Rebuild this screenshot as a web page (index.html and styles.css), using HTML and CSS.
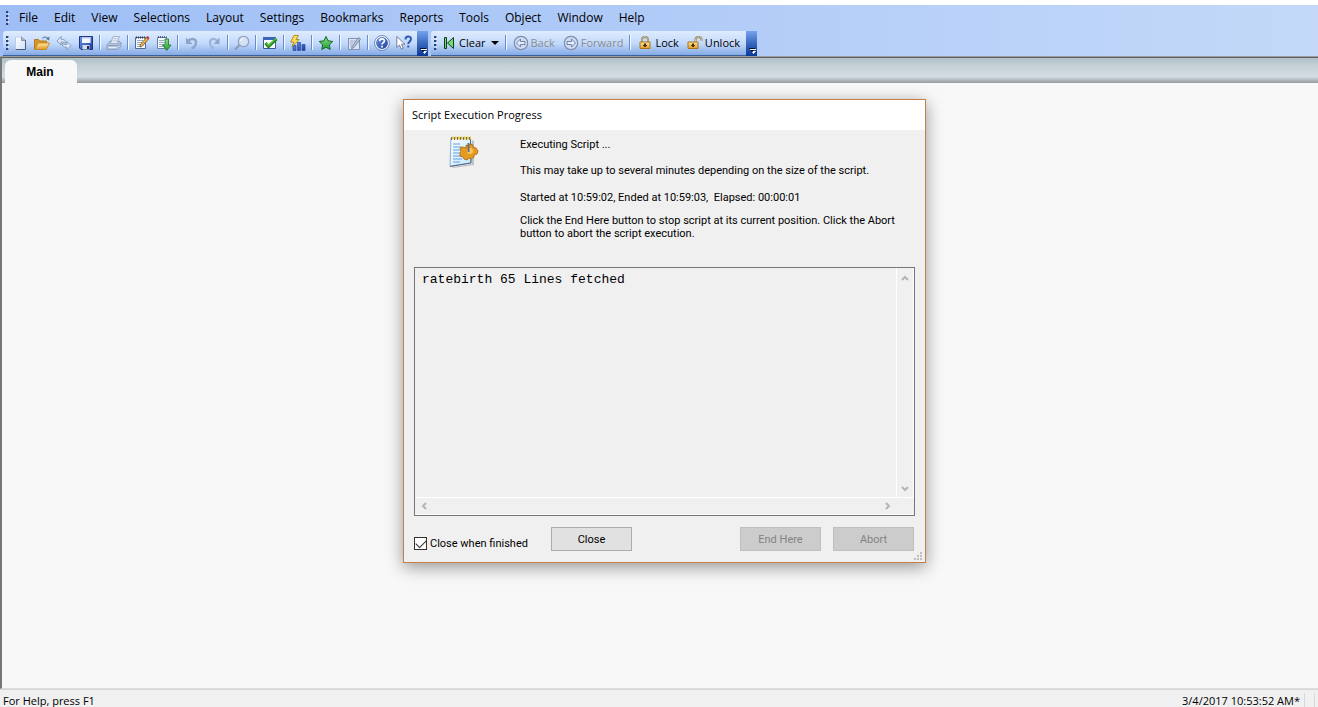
FILE: index.html
```
<!DOCTYPE html>
<html lang="en">
<head>
<meta charset="utf-8">
<title>Main</title>
<link rel="stylesheet" href="styles.css">
</head>
<body>
<svg width="0" height="0" class="defs" aria-hidden="true">
  <defs>
    <linearGradient id="gold" x1="0" y1="0" x2="0" y2="1"><stop offset="0" stop-color="#ffe7a0"/><stop offset="1" stop-color="#e19a28"/></linearGradient>
    <linearGradient id="paper" x1="0" y1="0" x2="1" y2="1"><stop offset="0" stop-color="#fff"/><stop offset="1" stop-color="#cfe0f4"/></linearGradient>
    <linearGradient id="blue" x1="0" y1="0" x2="1" y2="1"><stop offset="0" stop-color="#6f97e4"/><stop offset="1" stop-color="#1c3c9c"/></linearGradient>
    <linearGradient id="green" x1="0" y1="0" x2="0" y2="1"><stop offset="0" stop-color="#8be37a"/><stop offset="1" stop-color="#1f9a3a"/></linearGradient>
    <linearGradient id="sheet" x1="0" y1="0" x2="1" y2="1"><stop offset="0" stop-color="#fff"/><stop offset="1" stop-color="#bfe6fa"/></linearGradient>
  </defs>
</svg>
<div class="app">
  <header class="bars">
    <nav class="menubar" aria-label="Menu">
      <span class="grip"></span>
      <button>File</button><button>Edit</button><button>View</button><button>Selections</button><button>Layout</button><button>Settings</button><button>Bookmarks</button><button>Reports</button><button>Tools</button><button>Object</button><button>Window</button><button>Help</button>
    </nav>
    <div class="toolbars">
      <div class="toolbar" role="toolbar" aria-label="Standard">
        <span class="grip"></span>
        <button class="tool" aria-label="New"><svg viewBox="0 0 16 16"><path d="M3 1.500h7l3.500 3.500v10H3z" fill="url(#paper)"/><path d="M3.500 14V2H10" fill="none" stroke="#b9cbe6"/><path d="M13.500 5v9.500H3.500" fill="none" stroke="#4d5b76"/><path d="M9.500 2v3.500h4z" fill="#a9bad3" stroke="#65748e" stroke-width=".6"/></svg></button>
        <button class="tool" aria-label="Open"><svg viewBox="0 0 16 16"><path d="M.5 14V4.500h4l1 1.500h7v3" fill="#d9962a" stroke="#b87a1c"/><path d="M.7 14.500 4 8h11.700l-3.500 6.500z" fill="url(#gold)" stroke="#c27c15" stroke-width=".8"/><path d="M8.500 3.500c1.500-2 4-2 5.500 0" fill="none" stroke="#58779d" stroke-width="1.200"/><path d="m15.500 1.500-.3 4-3.200-1.500z" fill="#58779d"/></svg></button>
        <button class="tool" disabled aria-label="Reload"><svg viewBox="0 0 16 16"><path d="M1 6 5 1.500v2.700c3.500 0 5 1.300 5 4.300C9 7.200 7.500 7 5 7v2.800z" fill="#dbe6f7" stroke="#8195b8" stroke-width=".9"/><path d="m15 10.500-4.200 4.500v-2.700c-3.300 0-4.800-1.300-4.800-4.300 1 1.300 2.500 1.500 4.800 1.500V6.500z" fill="#dbe6f7" stroke="#8195b8" stroke-width=".9"/></svg></button>
        <button class="tool" aria-label="Save"><svg viewBox="0 0 16 16"><path d="M1.500 1.500h13v13H3l-1.500-1.500z" fill="url(#blue)" stroke="#20377d"/><path d="M4 2h8.500v6H4z" fill="#f3f7ff"/><path d="M4 2h8.500v1.500H4z" fill="#b8caef"/><path d="M4.500 10h7v4.500h-7z" fill="#d3dbe9"/><path d="M9 11h2v3H9z" fill="#1c2a55"/></svg></button>
        <span class="sep"></span>
        <button class="tool" disabled aria-label="Print"><svg viewBox="0 0 16 16"><path d="m1 10 3-4h9l2 2v3l-3 3.500H1z" fill="#b4c3dc" stroke="#8798b5" stroke-width=".8"/><path d="M4.500 8.500 7 1.500h6.500l-2.500 7z" fill="#e4ecf8" stroke="#95a6c2" stroke-width=".8"/><path d="M7.300 3.700h4.500M6.600 5.800h4.500" stroke="#a5b4cd" stroke-width=".7"/><path d="M1 10.500h11l3-3" fill="none" stroke="#8496b4" stroke-width=".8"/><path d="M2.500 12.500h8" stroke="#e4ecf8"/></svg></button>
        <span class="sep"></span>
        <button class="tool" aria-label="Edit script"><svg viewBox="0 0 16 16"><path d="M1.500 2.500h10v11h-10z" fill="#f5f8fd" stroke="#53688a"/><path d="M2 2.500h9.500" stroke="#2c3a55" stroke-dasharray="1 1" stroke-width="2"/><path d="M3 5.500h6M3 7.500h5M3 9.500h4M3 11.500h4" stroke="#7f96b8" stroke-width=".8"/><path d="m6.500 9.500 6-7 2 1.500-6 7-2.500 1z" fill="#f1b64a" stroke="#72511e" stroke-width=".8"/><path d="m12 2.500 1.500-1.500 2 1.500-1.200 2z" fill="#c33b35"/></svg></button>
        <button class="tool" aria-label="Run script"><svg viewBox="0 0 16 16"><path d="M1.500 2.500h9v11h-9z" fill="#f5f8fd" stroke="#6b7fa2"/><path d="M2 2h8.500" stroke="#3a4a69" stroke-dasharray="1 1" stroke-width="1.500"/><path d="M3 5.500h5M3 7.500h5M3 9.500h5M3 11.500h4" stroke="#7f96b8" stroke-width=".8"/><path d="M9 4h3.500v6H15l-4.200 5.500L6.500 10H9z" fill="url(#green)" stroke="#226f2c" stroke-width=".8"/></svg></button>
        <span class="sep"></span>
        <button class="tool" disabled aria-label="Undo"><svg viewBox="0 0 16 16"><path d="M4.500 5.500C8 3 12 3.500 12 7.500c0 3-2 5-4.500 6" fill="none" stroke="#8ea4cb" stroke-width="2.400"/><path d="M2 2.500V9h6.500z" fill="#8ea4cb"/></svg></button>
        <button class="tool" disabled aria-label="Redo"><svg viewBox="0 0 16 16"><path d="M11 5.500C8 3 4 3.500 4 7.500c0 3 2 5 4 6" fill="none" stroke="#a0b4d8" stroke-width="2.200"/><path d="M13.500 2.500V9H7.500z" fill="#8ea4cb"/></svg></button>
        <span class="sep"></span>
        <button class="tool" disabled aria-label="Search"><svg viewBox="0 0 16 16"><path d="m1.500 14 4.500-4.500" stroke="#8d9dbb" stroke-width="2.400" stroke-linecap="round"/><circle cx="9.500" cy="6.500" r="5.200" fill="#d5e1f4" stroke="#92a4c4" stroke-width="1.300"/><path d="M6.500 6c.3-1.500 1.500-2.500 3-2.500" fill="none" stroke="#fff"/></svg></button>
        <span class="sep"></span>
        <button class="tool" aria-label="Current selections"><svg viewBox="0 0 16 16"><path d="M1.500 2.500h12v11h-12z" fill="#fff" stroke="#375aa5"/><path d="M1 2h13v3H1z" fill="#3c65b7"/><path d="m3.500 8 3 3.500L14.500 4" fill="none" stroke="#1e7f16" stroke-width="3"/><path d="m4 8 2.500 2.500 7.500-7" fill="none" stroke="#4fc92d" stroke-width="1.500"/></svg></button>
        <span class="sep"></span>
        <button class="tool" aria-label="Quick chart wizard"><svg viewBox="0 0 16 16"><path d="M3 10.500h3v5H3zM7.500 7.500h3v8h-3zM12 9.500h3v6h-3z" fill="url(#blue)" stroke="#234a9f" stroke-width=".7"/><path d="M4 .5h4.500L6 4.500h3L2 12l1.800-5H.7z" fill="#ffdf4d" stroke="#a87811" stroke-width=".8"/></svg></button>
        <span class="sep"></span>
        <button class="tool" aria-label="Add bookmark"><svg viewBox="0 0 16 16"><path d="m8 1.500 2.100 4.300 4.700.7-3.400 3.300.8 4.700L8 12.300l-4.200 2.200.8-4.700L1.200 6.500l4.700-.7z" fill="url(#green)" stroke="#17672e" stroke-linejoin="round"/></svg></button>
        <span class="sep"></span>
        <button class="tool" disabled aria-label="Notes"><svg viewBox="0 0 16 16"><path d="M2.500 3.500h11v11h-11z" fill="#d9e3f4" stroke="#8193b3"/><path d="M4 6h5M4 8h3M4 10h2" stroke="#9bacc8"/><path d="m6 11.500 6.500-9 2 1.500L8 12.500l-2.500 1z" fill="#b3c2db" stroke="#71829e" stroke-width=".9"/></svg></button>
        <span class="sep"></span>
        <button class="tool" aria-label="Help topics"><svg viewBox="0 0 16 16"><circle cx="8" cy="8" r="6.600" fill="url(#blue)" stroke="#fff" stroke-width="1.300"/><circle cx="8" cy="8" r="7.400" fill="none" stroke="#435f9b" stroke-width=".7"/><path d="M5.700 6.300c0-3.200 4.700-3 4.700-.3C10.400 7.700 8 7.700 8 9.600" fill="none" stroke="#fff" stroke-width="1.700"/><path d="M7.200 10.700h1.700v1.700H7.200z" fill="#fff"/></svg></button>
        <button class="tool" aria-label="Context help"><svg viewBox="0 0 16 16"><path d="M.8 1.500v11l2.700-2.500 1.800 4.200 2-1-1.800-4H9z" fill="#fff" stroke="#68748a" stroke-width=".9"/><path d="M9.500 4.500c0-4 5.500-4 5.500-.5 0 2.500-2.700 2.500-2.700 5" fill="none" stroke="#2f5bb4" stroke-width="2"/><path d="M11.300 10.500h2v2h-2z" fill="#2f5bb4"/></svg></button>
        <button class="overflow" aria-label="Toolbar options"><svg viewBox="0 0 8 8"><path d="M2 3h6v1H2zM3 5h5L5.500 8z" fill="#fff"/><path d="M1 2h6v1H1zM2 4h4L4 6.500z" fill="#0a1034"/></svg></button>
      </div>
      <div class="toolbar" role="toolbar" aria-label="Navigation">
        <span class="grip"></span>
        <button class="labelled"><svg viewBox="0 0 16 16"><path d="M3.500 2.500h2v11h-2zM12.500 2.500v11l-6-5.500z" fill="#6be26b" stroke="#173b1b"/></svg>Clear<i class="caret"></i></button>
        <span class="sep"></span>
        <button class="labelled" disabled><svg viewBox="0 0 16 16"><circle cx="8" cy="8" r="6.700" fill="#cfdcf2" stroke="#7d8eb1" stroke-width="1.200"/><path d="m3.500 8 4-4v2.500H12v3H7.500V12z" fill="#e4edfa" stroke="#6477a0" stroke-width=".9"/></svg>Back</button>
        <button class="labelled" disabled><svg viewBox="0 0 16 16"><circle cx="8" cy="8" r="6.700" fill="#cfdcf2" stroke="#7d8eb1" stroke-width="1.200"/><path d="m12.500 8-4-4v2.500H4v3h4.500V12z" fill="#e4edfa" stroke="#6477a0" stroke-width=".9"/></svg>Forward</button>
        <span class="sep"></span>
        <button class="labelled"><svg viewBox="0 0 16 16"><path d="M5 7V4.500c0-3.500 6-3.500 6 0V7" fill="none" stroke="#8f7f5a" stroke-width="2"/><path d="M5 7V4.500c0-3.500 6-3.500 6 0V7" fill="none" stroke="#efe5c4" stroke-width=".7"/><path d="M3 7h10v6.500H3z" fill="url(#gold)" stroke="#a97418"/><path d="M7 8.500h2V10h1v1H9v1H7v-1H6v-1h1z" fill="#473410"/></svg>Lock</button>
        <button class="labelled"><svg viewBox="0 0 16 16"><path d="M8.500 7V4.500c0-3.500 6-3.500 6 0V6" fill="none" stroke="#8f7f5a" stroke-width="2"/><path d="M8.500 7V4.500c0-3.500 6-3.500 6 0V6" fill="none" stroke="#efe5c4" stroke-width=".7"/><path d="M1 7h10v6.500H1z" fill="url(#gold)" stroke="#a97418"/><path d="M5 8.500h2V10h1v1H7v1H5v-1H4v-1h1z" fill="#473410"/></svg>Unlock</button>
        <button class="overflow" aria-label="Toolbar options"><svg viewBox="0 0 8 8"><path d="M2 3h6v1H2zM3 5h5L5.500 8z" fill="#fff"/><path d="M1 2h6v1H1zM2 4h4L4 6.500z" fill="#0a1034"/></svg></button>
      </div>
    </div>
  </header>
  <main class="workspace">
    <div class="tabs" role="tablist"><button class="tab" role="tab" aria-selected="true">Main</button></div>
    <div class="canvas">
      <section class="dialog" role="dialog" aria-labelledby="dialog-title">
        <h1 id="dialog-title">Script Execution Progress</h1>
        <div class="intro">
          <svg class="script-icon" viewBox="0 0 32 34" aria-hidden="true"><path d="m5 32 20-3V5l2 1v24L6 33z" fill="#8b929e" opacity=".5"/><path d="M4 3h19.500L24 28 3 31z" fill="url(#sheet)" stroke="#8caed0"/><path d="M23.500 3 24 28 3 31.500" fill="none" stroke="#4e6780"/><path d="M6 9h7M6 12h9M6 15h7M6 18h7M6 21h8M6 24h9M6 27h7" stroke="#619ce0"/><path d="M4 3.500h20" stroke="#77705a" stroke-width="3" stroke-dasharray="1 2"/><path d="M5 3h19" stroke="#edca2c" stroke-width="3" stroke-dasharray="1.500 1.500"/><path d="m19 10 3 1 1-2 3 1v2l3 1 2 3-1 3-3 1v2l-3 2-2-1-2 2-3-1-1-2-3-1v-3l1-2-1-3 3-1 3 1z" fill="#e49b20" stroke="#a8640b" stroke-width=".8"/><circle cx="23" cy="16" r="3" fill="#f6c662"/><path d="M21.500 8v9" stroke="#66717d" stroke-width="2"/></svg>
          <div class="messages">
            <p>Executing Script ...</p>
            <p>This may take up to several minutes depending on the size of the script.</p>
            <p>Started at 10:59:02, Ended at 10:59:03,&nbsp; Elapsed: 00:00:01</p>
            <p>Click the End Here button to stop script at its current position. Click the Abort<br>button to abort the script execution.</p>
          </div>
        </div>
        <div class="log">
          <textarea readonly aria-label="Script log">ratebirth 65 Lines fetched</textarea>
          <div class="vscroll"><svg viewBox="0 0 8 6"><path d="m1 5 3-3 3 3"/></svg><svg viewBox="0 0 8 6"><path d="m1 1 3 3 3-3"/></svg></div>
          <div class="hscroll"><svg viewBox="0 0 6 8"><path d="M5 1 2 4l3 3"/></svg><svg viewBox="0 0 6 8"><path d="m1 1 3 3-3 3"/></svg></div>
        </div>
        <div class="actions">
          <label class="check"><input type="checkbox" checked>Close when finished</label>
          <button class="push">Close</button>
          <button class="push end" disabled>End Here</button>
          <button class="push" disabled>Abort</button>
        </div>
        <svg class="resize" viewBox="0 0 8 8" aria-hidden="true"><path d="M6 0h2v2H6zM3 3h2v2H3zM6 3h2v2H6zM0 6h2v2H0zM3 6h2v2H3zM6 6h2v2H6z" fill="#bfbfbf"/></svg>
      </section>
    </div>
  </main>
  <footer class="status"><span>For Help, press F1</span><span class="time">3/4/2017 10:53:52 AM*</span><span class="cell"></span></footer>
</div>
</body>
</html>
```
FILE: styles.css
```
* { box-sizing: border-box; }
body { margin: 0; background: #fff; color: #000; font: 11px/16px "Open Sans", "Noto Sans", sans-serif; }
button { font: inherit; color: inherit; border: 0; padding: 0; background: none; }
.defs { position: absolute; }
.app { display: flex; flex-direction: column; height: 100vh; padding-top: 5px; overflow: hidden; }
.bars { background: linear-gradient(90deg, #9ebef5, #b4cef8 60%, #c4d9f9); border-bottom: 1px solid #9b9b9b; }
.menubar { display: flex; align-items: center; height: 26px; padding-left: 6px; font-size: 12px; }
.menubar button { padding: 0 8px; }
.menubar .grip { margin-right: 2px; }
.grip { width: 3px; height: 14px; flex: none; background: repeating-linear-gradient(#27417f 0 2px, transparent 2px 4px); border-right: 1px solid #fff8; }
.toolbars { display: flex; height: 25px; padding-left: 3px; gap: 3px; }
.toolbar { display: flex; align-items: center; padding: 0 0 2px 3px; border-radius: 3px 0 0 0; background: linear-gradient(#dfecfe, #c2d9fb 50%, #86abe6 95%, #3b619c 96%); }
.tool { display: grid; place-items: center; width: 22px; height: 22px; }
.tool svg { width: 16px; height: 16px; }
.sep { width: 2px; height: 15px; margin: 0 2px; background: linear-gradient(90deg, #6a8ccb 50%, #f1f9ff 50%); flex: none; }
.overflow { display: flex; align-items: flex-end; justify-content: center; align-self: flex-start; width: 11px; height: 25px; margin-left: 2px; padding-bottom: 2px; background: linear-gradient(#76a3ee, #3868bd 50%, #083895); }
.overflow svg { width: 8px; height: 8px; }
.labelled { display: flex; align-items: center; gap: 2px; height: 22px; padding: 0 4px; }
.labelled:disabled { color: #8d8d8d; }
.labelled svg { width: 16px; height: 16px; }
.caret { margin-left: 3px; border: 4px solid transparent; border-top-color: #000; border-bottom: 0; }
.workspace { flex: 1; display: flex; flex-direction: column; min-height: 0; border-left: 2px solid #777; border-top: 1px solid #5f5f5f; border-bottom: 1px solid #dcdcdc; }
.tabs { display: flex; align-items: flex-end; height: 25px; padding-left: 3px; background: linear-gradient(#adc0c8, #c3d0d6 30%, #d4dde3 75%, #9ba2a7 97%); }
.tab { width: 72px; height: 23px; padding-right: 2px; border-radius: 6px 6px 0 0; background: #f8f8f8; font: bold 12px/22px "Liberation Sans", sans-serif; }
.canvas { flex: 1; display: flex; justify-content: center; align-items: flex-start; padding: 16px 0; background: #f8f8f8; }
.dialog { position: relative; width: 523px; margin-left: 9px; border: 1px solid #c57f45; background: #f0f0f0; box-shadow: 0 4px 16px #0006; font: 11px/13px Roboto, sans-serif; }
.dialog h1 { margin: 0; padding: 7px 8px; background: #fff; font: 11px/16px "Open Sans", "Noto Sans", sans-serif; }
.intro { display: flex; height: 137px; padding: 5px 10px 0 43px; }
.script-icon { width: 32px; height: 34px; margin-right: 41px; flex: none; }
.messages p { margin: 3px 0 13px; white-space: nowrap; }
.messages p:nth-child(2) { margin-bottom: 14px; }
.messages p:nth-child(3) { margin-bottom: 10px; }
.log { display: grid; grid-template: 229px 18px / 1fr 18px; margin: 0 10px; border: 1px solid #737578; }
.log textarea { resize: none; border: 0; padding: 4px 7px; background: #f0f0f0; outline: 0; overflow: hidden; width: 100%; height: 100%; font: 13px/16px "Liberation Mono", monospace; }
.log svg { fill: none; stroke: #b5b5b5; stroke-width: 2; }
.vscroll { display: flex; flex-direction: column; justify-content: space-between; align-items: center; padding: 7px 0 5px; border: 1px solid #fff; border-width: 0 1px; }
.vscroll svg { width: 8px; height: 6px; }
.hscroll { grid-column: 1 / 3; display: flex; justify-content: space-between; align-items: center; padding: 0 23px 0 6px; border: 1px solid #fff; border-width: 1px 0; }
.hscroll svg { width: 6px; height: 8px; }
.actions { display: flex; align-items: flex-start; padding: 11px 11px 11px 10px; }
.check { display: flex; align-items: center; gap: 3px; width: 137px; padding-top: 10px; white-space: nowrap; }
.check input { appearance: none; width: 13px; height: 13px; margin: 0; border: 1px solid #333; background: #fff; display: grid; place-items: center; }
.check input::after { content: ""; width: 9px; height: 5px; border: solid #333; border-width: 0 0 1px 1px; transform: rotate(-45deg) translate(1px, -1px); }
.push { width: 81px; height: 24px; border: 1px solid #adadad; background: #e1e1e1; }
.push:disabled { border-color: #bfbfbf; background: #ccc; color: #838383; }
.end { margin: 0 12px 0 auto; }
.resize { position: absolute; right: 3px; bottom: 2px; width: 8px; height: 8px; }
.status { display: flex; align-items: center; height: 18px; padding: 4px 3px 0; background: #f0f0f0; border-top: 1px solid #d7d7d7; }
.time { margin-left: auto; padding-right: 4px; border-right: 1px solid #d7d7d7; }
.cell { width: 10px; height: 16px; border-right: 1px solid #d7d7d7; }
```
